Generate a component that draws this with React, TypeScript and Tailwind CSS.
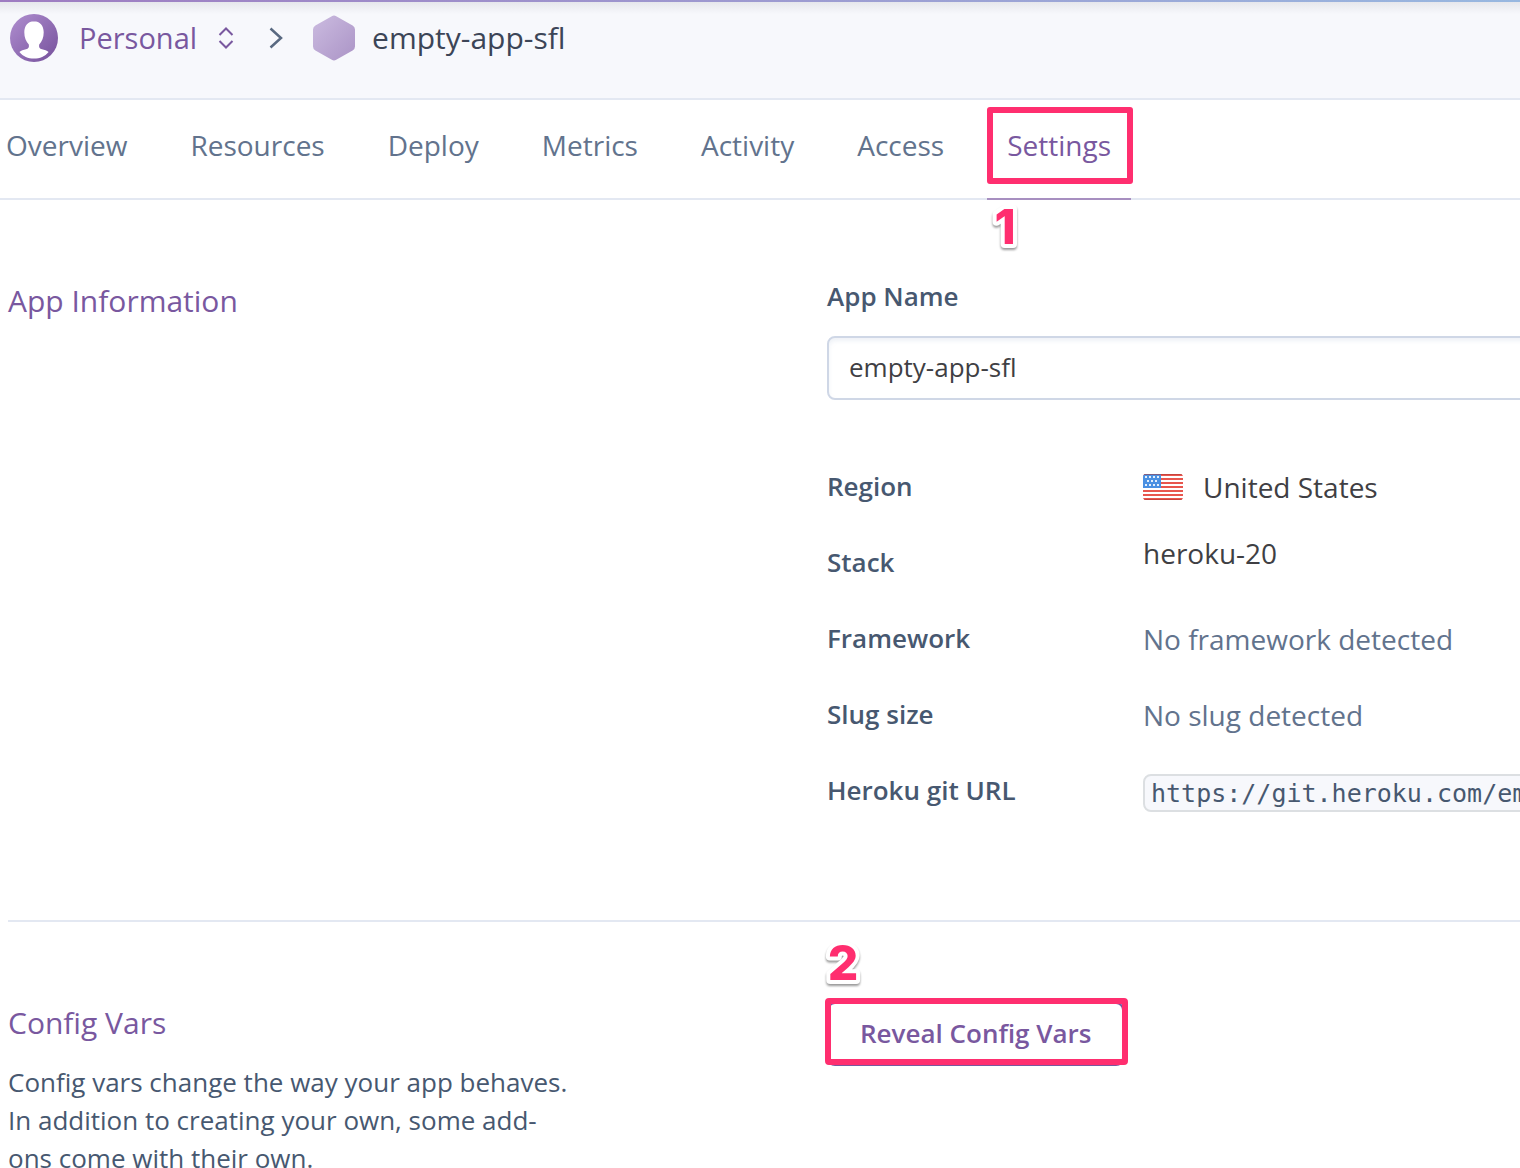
import type { ReactNode } from "react";

const tabs = ["Overview", "Resources", "Deploy", "Metrics", "Activity", "Access", "Settings"];

function Avatar() {
  return (
    <svg viewBox="0 0 48 48" className="size-12 shrink-0" aria-hidden="true">
      <defs>
        <linearGradient id="avatar" x1="0" y1="0" x2="1" y2="1">
          <stop offset="0" stopColor="#b08fd0" />
          <stop offset="1" stopColor="#75509b" />
        </linearGradient>
      </defs>
      <circle cx="24" cy="24" r="24" fill="url(#avatar)" />
      <path
        d="M24 7.3c-5.800 0-9.700 4.400-9.700 11 0 5.200 1.700 9.300 4.500 12.200.6 2.700-.4 4.200-2.800 4.800-2.700.7-4.700 1.200-6.600 2.600 3.600 4.500 8.700 6.600 14.600 6.600s11-2.100 14.600-6.600c-1.900-1.400-3.900-1.900-6.600-2.600-2.400-.6-3.400-2.100-2.800-4.800 2.800-2.900 4.500-7 4.500-12.200 0-6.600-3.900-11-9.700-11z"
        fill="#fff"
      />
    </svg>
  );
}

function AppHexagon() {
  return (
    <svg viewBox="0 0 42 46" className="h-[46px] w-[42px] shrink-0" aria-hidden="true">
      <defs>
        <linearGradient id="hexagon" x1="0" y1="0" x2="1" y2="1">
          <stop offset="0" stopColor="#cbbbe0" />
          <stop offset="1" stopColor="#ab94c6" />
        </linearGradient>
      </defs>
      <path
        d="M18.800 1.200a4.500 4.500 0 0 1 4.400 0l16.400 9.300A4.600 4.600 0 0 1 42 14.500v17a4.600 4.600 0 0 1-2.400 4l-16.400 9.300a4.500 4.500 0 0 1-4.400 0L2.400 35.500a4.600 4.600 0 0 1-2.400-4v-17a4.600 4.600 0 0 1 2.400-4z"
        fill="url(#hexagon)"
      />
    </svg>
  );
}

function UsFlag() {
  return (
    <svg viewBox="0 0 40 26" className="h-[26px] w-10 shrink-0" aria-hidden="true">
      <defs>
        <clipPath id="flag">
          <rect width="40" height="26" rx="3" />
        </clipPath>
      </defs>
      <g clipPath="url(#flag)">
        <rect width="40" height="26" fill="#fff" />
        {[0, 4, 8, 12, 16, 20, 24].map((y) => (
          <rect key={y} y={y} width="40" height="2" fill="#e8564e" />
        ))}
        <rect width="18" height="14" fill="#4a90e2" />
        {[2, 6, 10].map((y, row) =>
          [3, 7, 11, 15].slice(0, row === 1 ? 3 : 4).map((x) => (
            <rect key={`${x}-${y}`} x={row === 1 ? x + 1 : x - 1} y={y} width="2" height="2" fill="#e3effc" />
          )),
        )}
      </g>
      <path d="M1 .5h38M1 25.500h38" stroke="#a82f2a" strokeOpacity=".5" />
    </svg>
  );
}

function Marker({ children }: { children: ReactNode }) {
  return (
    <svg viewBox="0 0 40 48" className="h-12 w-10 overflow-visible drop-shadow-[0_2px_1px_rgba(0,0,0,0.4)]">
      <text
        x="20"
        y="40"
        textAnchor="middle"
        className="fill-[#ff2e6f] stroke-white stroke-[8px] font-['Inter','Liberation_Sans',sans-serif] text-[48px] font-extrabold [paint-order:stroke] [stroke-linejoin:round]"
      >
        {children}
      </text>
    </svg>
  );
}

function Detail({ label, children, offset = "pt-[2px]" }: { label: string; children: ReactNode; offset?: string }) {
  return (
    <div className="grid h-[76px] grid-cols-[316px_1fr] items-center">
      <dt className="text-[26px] font-semibold text-[#475870]">{label}</dt>
      <dd className={`flex items-center text-[28px] ${offset}`}>{children}</dd>
    </div>
  );
}

export default function App() {
  return (
    <div className="min-h-screen overflow-hidden bg-white font-['Open_Sans','Noto_Sans',sans-serif] text-[#3f3f44] [font-variant-ligatures:common-ligatures_discretionary-ligatures]">
      <header className="border-b-2 border-[#e3e8f2] bg-[#f7f8fc]">
        <div className="h-[2px] bg-linear-to-r from-[#9e7cc1] to-[#98b8e0]" />
        <div className="h-3 bg-linear-to-b from-[#e6e7ec] to-[#f7f8fc]" />
        <div className="-mt-3 flex h-24 items-center pb-6 pl-[10px]">
          <Avatar />
          <button className="ml-[21px] flex items-center gap-[21px] text-[29px] leading-10 text-[#79589f]">
            Personal
            <svg viewBox="0 0 16 22" className="h-[22px] w-4" fill="none" stroke="currentColor" strokeWidth="2" aria-hidden="true">
              <path d="M1.500 8 8 1.500 14.500 8M1.500 14 8 20.500 14.500 14" />
            </svg>
          </button>
          <svg viewBox="0 0 14 22" className="ml-[35px] h-[22px] w-[14px]" fill="none" stroke="#596981" strokeWidth="2.500" aria-hidden="true">
            <path d="M1.500 1.500 12 11 1.500 20.500" />
          </svg>
          <a href="#app" className="ml-[30px] flex items-center gap-[17px] text-[30px] leading-10 text-[#3c4557]">
            <AppHexagon />
            empty-app-sfl
          </a>
        </div>
      </header>

      <nav className="border-b-2 border-[#e3e8f2] pr-4">
        <ul className="-mb-[2px] -ml-[14px] flex gap-[23px]">
          {tabs.map((tab) =>
            tab === "Settings" ? (
              <li key={tab} className="relative">
                <a href="#settings" aria-current="page" className="flex h-[100px] items-center border-b-2 border-[#a78fc0] px-5 pb-2 text-[28px] text-[#79589f]">
                  {tab}
                </a>
                <span className="pointer-events-none absolute -right-[2px] left-0 top-[7px] h-[77px] rounded-[3px] border-6 border-[#ff2e6f]" />
                <span className="absolute top-[104px] -left-[2px]">
                  <Marker>1</Marker>
                </span>
              </li>
            ) : (
              <li key={tab}>
                <a href="#tab" className="flex h-[98px] items-center px-5 pb-2 text-[28px] text-[#62738d]">
                  {tab}
                </a>
              </li>
            ),
          )}
        </ul>
      </nav>

      <main className="pl-2">
        <section className="grid grid-cols-[13fr_11fr] border-b-2 border-[#e3e8f2] pt-[77px] pb-[92px]">
          <h2 className="pt-1 text-[30px] leading-10 text-[#79589f]">App Information</h2>
          <div className="min-w-0">
            <label htmlFor="app-name" className="block text-[26px] leading-[38px] font-semibold text-[#475870]">
              App Name
            </label>
            <input
              id="app-name"
              defaultValue="empty-app-sfl"
              className="mt-[21px] block h-16 w-[calc(100%+16px)] rounded-lg border-2 border-[#cfd7e6] px-5 pb-[3px] text-[26px] shadow-[inset_0_3px_4px_rgba(207,215,230,0.35)]"
            />
            <dl className="mt-12">
              <Detail label="Region">
                <UsFlag />
                <span className="ml-5">United States</span>
              </Detail>
              <Detail label="Stack" offset="pb-[18px]">heroku-20</Detail>
              <Detail label="Framework">
                <span className="text-[#62738d]">No framework detected</span>
              </Detail>
              <Detail label="Slug size">
                <span className="text-[#62738d]">No slug detected</span>
              </Detail>
              <Detail label="Heroku git URL" offset="pt-[6px]">
                <code className="rounded-lg border-2 border-[#dcdfe2] bg-[#f7f8fc] px-[6px] pt-[2px] font-['DejaVu_Sans_Mono',monospace] text-[25px] leading-8 whitespace-nowrap text-[#475870]">
                  https://git.heroku.com/empty-app-sfl.git
                </code>
              </Detail>
            </dl>
          </div>
        </section>

        <section className="grid grid-cols-[13fr_11fr] pt-[18px]">
          <div className="pt-[63px]">
            <h2 className="text-[30px] leading-10 text-[#79589f]">Config Vars</h2>
            <p className="mt-5 max-w-[560px] text-[26px] leading-[38px] text-[#475870]">
              Config vars change the way your app behaves. In addition to creating your own, some add-<br />ons come with their own.
            </p>
          </div>
          <div className="flex flex-col items-start">
            <div className="-ml-1 h-[62px]">
              <Marker>2</Marker>
            </div>
            <div className="relative">
              <button className="h-16 rounded-lg border-2 border-[#79589f] px-[31px] pb-[2px] text-[26px] font-semibold text-[#79589f]">
                Reveal Config Vars
              </button>
              <span className="pointer-events-none absolute -top-1 -right-1 bottom-px -left-[2px] rounded-[4px] border-6 border-[#ff2e6f]" />
            </div>
          </div>
        </section>
      </main>
    </div>
  );
}
